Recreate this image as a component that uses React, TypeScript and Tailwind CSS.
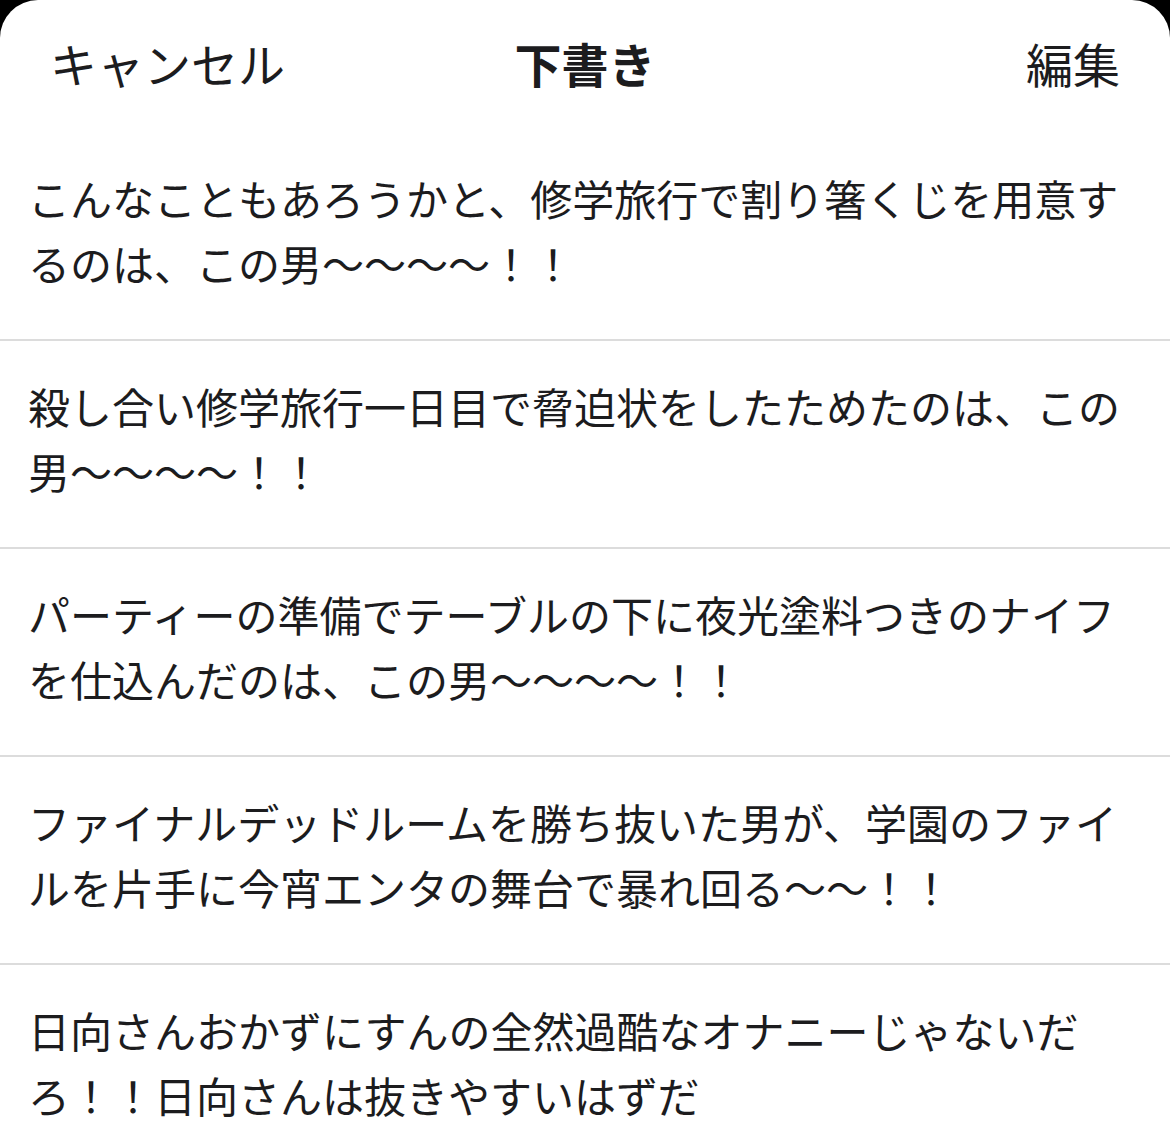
import React from 'react';

const drafts = [
  'こんなこともあろうかと、修学旅行で割り箸くじを用意するのは、この男〜〜〜〜！！',
  '殺し合い修学旅行一日目で脅迫状をしたためたのは、この男〜〜〜〜！！',
  'パーティーの準備でテーブルの下に夜光塗料つきのナイフを仕込んだのは、この男〜〜〜〜！！',
  'ファイナルデッドルームを勝ち抜いた男が、学園のファイルを片手に今宵エンタの舞台で暴れ回る〜〜！！',
  '日向さんおかずにすんの全然過酷なオナニーじゃないだろ！！日向さんは抜きやすいはずだ',
];

export default function App() {
  return (
    <div
      className="w-[1170px] h-[1131px] bg-black overflow-hidden"
      style={{ fontFamily: '"Noto Sans CJK JP", "Noto Sans", sans-serif' }}
    >
      <div className="h-full bg-white rounded-t-[38px] text-[#1c1c1e]">
        <div className="grid grid-cols-3 items-center h-[133px] px-[50px] pb-[6px] text-[47px]">
          <div className="text-left">キャンセル</div>
          <div className="text-center font-bold">下書き</div>
          <div className="text-right">編集</div>
        </div>
        <ul>
          {drafts.map((d, i) => (
            <li
              key={i}
              className={
                'px-[28px] pt-[32px] pb-[44px] text-[42px] leading-[65px] ' +
                (i < drafts.length - 1 ? 'border-b-2 border-[#dcdcdc]' : '')
              }
            >
              {d}
            </li>
          ))}
        </ul>
      </div>
    </div>
  );
}
